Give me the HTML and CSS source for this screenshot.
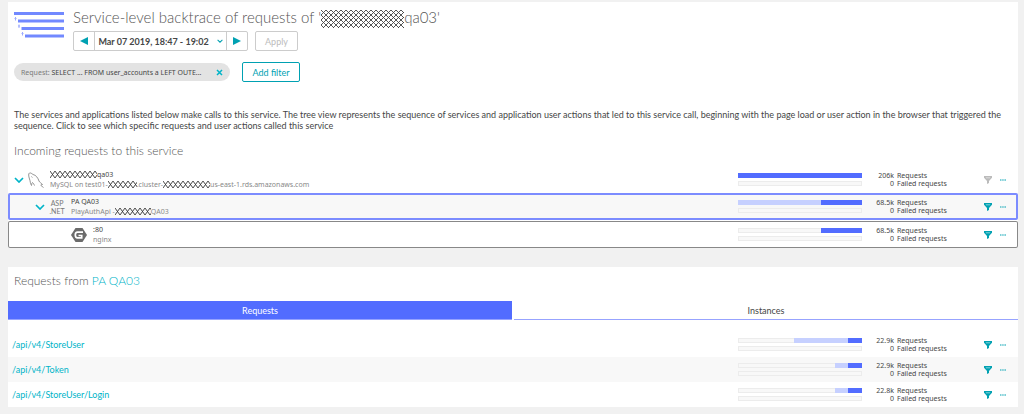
FILE: index.html
```html
<!DOCTYPE html>
<html lang="en">
<head>
  <meta charset="UTF-8">
  <title>Service-level backtrace</title>
  <link rel="stylesheet" href="styles.css">
</head>
<body>

<!-- shared icons -->
<svg class="defs" width="0" height="0" aria-hidden="true">
  <defs>
    <pattern id="hatch" width="5" height="5" patternUnits="userSpaceOnUse">
      <path d="M0 0l5 5M5 0L0 5" stroke="#444" stroke-width="0.9" fill="none"/>
    </pattern>
    <pattern id="hatch-small" width="5" height="7" patternUnits="userSpaceOnUse">
      <path d="M0 0l5 7M5 0L0 7" stroke="#333" stroke-width="0.9" fill="none"/>
    </pattern>
    <symbol id="chevron" viewBox="0 0 10 6">
      <path d="M1 1l4 4 4-4" fill="none" stroke="currentColor" stroke-width="1.7"/>
    </symbol>
    <symbol id="funnel" viewBox="0 0 8 8">
      <path d="M0 0h8v1.8L5 5v2L3 8V5L0 1.8z" fill="currentColor"/>
      <path d="M1.8 1.8h4.4" stroke="#fff" stroke-width="0.5"/>
    </symbol>
    <symbol id="dots" viewBox="0 0 6 2">
      <path d="M0 1h1.5M2.2 1h1.5M4.4 1H6" stroke="currentColor" stroke-width="1"/>
    </symbol>
  </defs>
</svg>

<main class="panel">
  <header class="header">
    <svg class="logo" viewBox="0 0 50 27" aria-hidden="true">
      <path d="M0 1.500h50M4 9h46M7.500 16.500h42.500M11 24h39" stroke="#7289ff" stroke-width="3.200" fill="none"/>
      <path d="M1.500 5v3.500M.5 6.500h2M5 12.500V16M4 14h2M8.500 20v3.500M7.500 21.500h2" stroke="#9dabff" stroke-width="1" fill="none"/>
    </svg>
    <div>
      <h1>Service-level backtrace of requests of '<svg class="redacted title-mark" aria-hidden="true"><rect width="100%" height="100%" fill="url(#hatch)"/></svg>qa03'</h1>
      <div class="toolbar">
        <div class="timeframe">
          <button class="step" aria-label="Previous"><svg width="8" height="8" viewBox="0 0 8 8"><path d="M8 0v8L0 4z" fill="currentColor"/></svg></button>
          <button class="range">Mar 07 2019, 18:47 - 19:02 <svg width="6" height="4"><use href="#chevron"/></svg></button>
          <button class="step" aria-label="Next"><svg width="8" height="8" viewBox="0 0 8 8"><path d="M0 0v8l8-4z" fill="currentColor"/></svg></button>
        </div>
        <button class="apply" disabled>Apply</button>
      </div>
    </div>
  </header>

  <div class="filters">
    <div class="chip">
      <span><span class="key">Request:</span> SELECT ... FROM user_accounts a LEFT OUTE...</span>
      <button aria-label="Remove filter"><svg width="7" height="7" viewBox="0 0 7 7"><path d="M1 1l5 5M6 1L1 6" stroke="currentColor" stroke-width="1.5"/></svg></button>
    </div>
    <button class="add-filter">Add filter</button>
  </div>

  <p class="intro">The services and applications listed below make calls to this service. The tree view represents the sequence of services and application user actions that led to this service call, beginning with the page load or user action in the browser that triggered the sequence. Click to see which specific requests and user actions called this service</p>

  <h2>Incoming requests to this service</h2>

  <div class="tree">
    <div class="node">
      <button class="toggle" aria-label="Collapse"><svg width="10" height="6"><use href="#chevron"/></svg></button>
      <svg class="node-icon" viewBox="0 0 16 16" aria-hidden="true">
        <path d="M3.500 13.500C2 11 2.500 9.500 1.500 7 .5 4 .3 1.500 1.500 1c1.200-.4 2.500.8 3.500 1.500C8 3 10 6 11 9c.5 1.500 2.500 2 3.500 3.500-1.500 0-2 .3-1.500 1 .6.700 1.500 1 2.500 2M4.500 10.500c-.8.500-.8 2-1 3M4.500 10.500c1.200 1 1.500 2 2 3" fill="none" stroke="#888" stroke-width="0.9"/>
        <path d="M3.500 4.500l.8 1" stroke="#888" stroke-width="0.9"/>
      </svg>
      <div class="node-text">
        <div class="name"><svg class="redacted mark-l" aria-hidden="true"><rect width="100%" height="100%" fill="url(#hatch-small)"/></svg>qa03</div>
        <div class="detail">MySQL on test01-<svg class="redacted mark-s" aria-hidden="true"><rect width="100%" height="100%" fill="url(#hatch-small)"/></svg>.cluster-<svg class="redacted mark-l" aria-hidden="true"><rect width="100%" height="100%" fill="url(#hatch-small)"/></svg>us-east-1.rds.amazonaws.com</div>
      </div>
      <div class="metrics">
        <div class="bars">
          <div class="bar"><i class="own" style="width: 100%"></i></div>
          <div class="bar"></div>
        </div>
        <dl class="stats"><dd>206k</dd><dt>Requests</dt><dd>0</dd><dt>Failed requests</dt></dl>
        <button class="filter" aria-label="Filter" disabled><svg width="8" height="8"><use href="#funnel"/></svg></button>
        <button class="more" aria-label="More"><svg width="6" height="2"><use href="#dots"/></svg></button>
      </div>
    </div>

    <div class="node level-1 selected">
      <button class="toggle" aria-label="Collapse"><svg width="10" height="6"><use href="#chevron"/></svg></button>
      <div class="node-icon asp">ASP<br>.NET</div>
      <div class="node-text">
        <div class="name">PA QA03</div>
        <div class="detail">PlayAuthApi -<svg class="redacted mark-m" aria-hidden="true"><rect width="100%" height="100%" fill="url(#hatch-small)"/></svg>QA03</div>
      </div>
      <div class="metrics">
        <div class="bars">
          <div class="bar"><i class="rest" style="width: 67%"></i><i class="own" style="width: 33%"></i></div>
          <div class="bar"></div>
        </div>
        <dl class="stats"><dd>68.5k</dd><dt>Requests</dt><dd>0</dd><dt>Failed requests</dt></dl>
        <button class="filter" aria-label="Filter"><svg width="8" height="8"><use href="#funnel"/></svg></button>
        <button class="more" aria-label="More"><svg width="6" height="2"><use href="#dots"/></svg></button>
      </div>
    </div>

    <div class="node level-2 outlined">
      <svg class="node-icon" viewBox="0 0 16 16" aria-hidden="true">
        <path d="M4.500 1h7L16 8l-4.500 7h-7L0 8z" fill="#6b6b6b"/>
        <path d="M12 5.200H6.500Q4.300 5.200 4.300 8t2.200 2.800h4.200V8.500H7.500" fill="none" stroke="#fff" stroke-width="1.700"/>
      </svg>
      <div class="node-text">
        <div class="name">:80</div>
        <div class="detail">nginx</div>
      </div>
      <div class="metrics">
        <div class="bars">
          <div class="bar"><i class="own" style="width: 33%"></i></div>
          <div class="bar"></div>
        </div>
        <dl class="stats"><dd>68.5k</dd><dt>Requests</dt><dd>0</dd><dt>Failed requests</dt></dl>
        <button class="filter" aria-label="Filter"><svg width="8" height="8"><use href="#funnel"/></svg></button>
        <button class="more" aria-label="More"><svg width="6" height="2"><use href="#dots"/></svg></button>
      </div>
    </div>
  </div>
</main>

<section class="panel">
  <h2 class="from">Requests from <a href="#">PA QA03</a></h2>
  <div class="tabs">
    <button class="tab active">Requests</button>
    <button class="tab">Instances</button>
  </div>

  <table class="requests">
    <tr>
      <td><a href="#">/api/v4/StoreUser</a></td>
      <td class="metrics-cell">
        <div class="metrics">
          <div class="bars">
            <div class="bar"><i class="rest" style="width: 44%"></i><i class="own" style="width: 11%"></i></div>
            <div class="bar"></div>
          </div>
          <dl class="stats"><dd>22.9k</dd><dt>Requests</dt><dd>0</dd><dt>Failed requests</dt></dl>
          <button class="filter" aria-label="Filter"><svg width="8" height="8"><use href="#funnel"/></svg></button>
          <button class="more" aria-label="More"><svg width="6" height="2"><use href="#dots"/></svg></button>
        </div>
      </td>
    </tr>
    <tr>
      <td><a href="#">/api/v4/Token</a></td>
      <td class="metrics-cell">
        <div class="metrics">
          <div class="bars">
            <div class="bar"><i class="rest" style="width: 11%"></i><i class="own" style="width: 11%"></i></div>
            <div class="bar"></div>
          </div>
          <dl class="stats"><dd>22.9k</dd><dt>Requests</dt><dd>0</dd><dt>Failed requests</dt></dl>
          <button class="filter" aria-label="Filter"><svg width="8" height="8"><use href="#funnel"/></svg></button>
          <button class="more" aria-label="More"><svg width="6" height="2"><use href="#dots"/></svg></button>
        </div>
      </td>
    </tr>
    <tr>
      <td><a href="#">/api/v4/StoreUser/Login</a></td>
      <td class="metrics-cell">
        <div class="metrics">
          <div class="bars">
            <div class="bar"><i class="rest" style="width: 11%"></i><i class="own" style="width: 11%"></i></div>
            <div class="bar"></div>
          </div>
          <dl class="stats"><dd>22.8k</dd><dt>Requests</dt><dd>0</dd><dt>Failed requests</dt></dl>
          <button class="filter" aria-label="Filter"><svg width="8" height="8"><use href="#funnel"/></svg></button>
          <button class="more" aria-label="More"><svg width="6" height="2"><use href="#dots"/></svg></button>
        </div>
      </td>
    </tr>
  </table>
</section>

</body>
</html>
```
FILE: styles.css
```css
* {
  box-sizing: border-box;
}

body {
  margin: 0;
  padding: 2px 6px 7px 8px;
  background-color: #f1f1f1;
  color: #454646;
  font-family: Lato, sans-serif;
  font-size: 9px;
  line-height: 11px;
}

button {
  display: flex;
  justify-content: center;
  align-items: center;
  padding: 0;
  border: none;
  background: none;
  color: #00a1b2;
  font: inherit;
  cursor: pointer;
}

a {
  color: #00b4c8;
  text-decoration: none;
}

svg {
  display: block;
  flex: none;
}

.defs {
  position: absolute;
}

.panel {
  background-color: #fff;
}

.panel + .panel {
  margin-top: 19px;
}

/* header */

.header {
  display: flex;
  gap: 9px;
  padding: 5px 6px 0;
}

.logo {
  width: 50px;
  height: 27px;
  margin-top: 5px;
}

h1,
h2 {
  margin: 0;
  color: #555;
  font-weight: 300;
}

h1 {
  font-size: 15px;
  line-height: 20px;
}

h2 {
  padding: 0 6px;
  font-size: 12px;
  line-height: 16px;
}

.redacted {
  display: inline-block;
  vertical-align: middle;
}

.title-mark {
  width: 83px;
  height: 18px;
}

.mark-s {
  width: 29px;
  height: 7px;
}

.mark-m {
  width: 36px;
  height: 7px;
}

.mark-l {
  width: 47px;
  height: 7px;
}

.toolbar {
  display: flex;
  gap: 7px;
  margin-top: 3px;
}

.timeframe,
.apply {
  height: 20px;
  border: 1px solid #ccc;
  border-radius: 2px;
}

.timeframe {
  display: flex;
  width: 175px;
}

.step {
  width: 20px;
}

.range {
  flex: 1;
  gap: 8px;
  border: solid #ccc;
  border-width: 0 1px;
  color: #454646;
  font-weight: 700;
}

.range svg {
  color: #00a1b2;
}

.apply {
  width: 43px;
  color: #bbb;
}

.filters {
  display: flex;
  align-items: center;
  gap: 12px;
  padding: 11px 6px 0;
}

.chip {
  display: flex;
  justify-content: space-between;
  align-items: center;
  width: 216px;
  height: 18px;
  padding: 0 7px;
  border-radius: 9px;
  background-color: #e3e3e3;
  font-family: "Noto Sans", sans-serif;
  font-size: 7px;
  white-space: nowrap;
}

.chip .key {
  color: #7a7a7a;
}

.chip button {
  color: #00b4c8;
}

.add-filter {
  width: 58px;
  height: 20px;
  border: 1px solid #00a1b2;
  border-radius: 2px;
}

.intro {
  margin: 0;
  padding: 27px 6px 12px;
}

/* tree */

.tree {
  padding-top: 7px;
}

.node {
  display: flex;
  align-items: center;
  height: 27px;
  padding-left: 6px;
}

.level-1 {
  padding-left: 27px;
}

.level-2 {
  padding-left: 63px;
}

.selected {
  border-radius: 2px;
  background-color: #f8f8f8;
  box-shadow: inset 0 0 0 2px #7c8cff;
}

.outlined {
  margin-top: 1px;
  border-radius: 2px;
  box-shadow: inset 0 0 0 1px #888;
}

.toggle {
  width: 10px;
  margin-right: 4px;
  color: #00b4c8;
}

.node-icon {
  width: 16px;
  height: 16px;
  margin-right: 6px;
}

.asp {
  color: #777;
  font-size: 7px;
  line-height: 8px;
  text-align: center;
}

.node-text {
  flex: 1;
  font-family: "Noto Sans", sans-serif;
  font-size: 7px;
  line-height: 10px;
}

.detail {
  color: #888;
}

/* bars and counts at the end of each row */

.metrics {
  display: flex;
  align-items: center;
  width: 280px;
}

.bars {
  display: grid;
  gap: 3px;
  width: 124px;
}

.bar {
  display: flex;
  justify-content: flex-end;
  height: 5px;
  background-color: #f8f8f8;
  box-shadow: inset 0 0 0 1px #ececec;
}

.own {
  background-color: #526cff;
}

.rest {
  background-color: #c6d0ff;
}

.stats {
  display: grid;
  grid-template-columns: 32px 1fr;
  column-gap: 3px;
  width: 122px;
  margin: 0;
  font-family: "Noto Sans", sans-serif;
  font-size: 7px;
  line-height: 8px;
}

.stats dd {
  margin: 0;
  text-align: right;
}

.filter {
  width: 8px;
}

.filter:disabled {
  color: #bbb;
}

.more {
  width: 6px;
  margin-left: 8px;
}

/* requests */

.from {
  padding: 6px 6px 12px;
}

.tabs {
  display: flex;
  gap: 2px;
}

.tab {
  flex: 1;
  height: 19px;
  border-bottom: 1px solid #97a3ff;
  color: #454646;
}

.tab.active {
  background-color: #526cff;
  color: #fff;
}

.requests {
  width: 100%;
  margin-top: 12px;
  border-collapse: collapse;
}

.requests td {
  height: 25px;
  padding: 0 0 0 4px;
}

.requests .metrics-cell {
  width: 280px;
  padding: 0;
}

.requests tr:nth-child(even) {
  background-color: #f8f8f8;
}
```
